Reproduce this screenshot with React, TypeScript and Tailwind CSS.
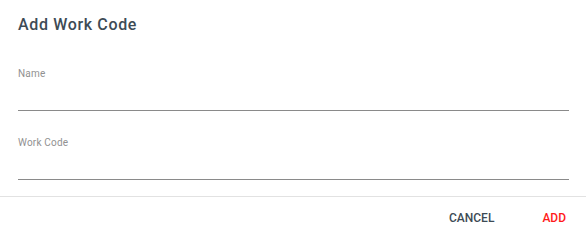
import React from 'react';

function Field({ label }: { label: string }) {
  return (
    <label className="block">
      <span className="block text-[10px] leading-[12px] text-[#919191] tracking-[0.2px]">{label}</span>
      <input
        type="text"
        className="block w-full h-[22px] mt-[9px] border-b border-[#8a8a8a] bg-transparent outline-none text-[13px] text-[#37474f]"
      />
    </label>
  );
}

export default function App() {
  return (
    <div className="w-[586px] h-[238px] bg-white font-['Roboto',sans-serif] overflow-hidden">
      <div className="px-[18px] pt-[14px]">
        <h2 className="text-[16px] leading-[22px] font-medium text-[#3d4b55] tracking-[0.65px]">Add Work Code</h2>
        <div className="mt-[32px] mr-[-1px] flex flex-col gap-[26px]">
          <Field label="Name" />
          <Field label="Work Code" />
        </div>
      </div>
      <div className="mt-[16px] border-t border-[#e2e2e2] flex justify-end items-center h-[43px] pr-[20px] gap-[48px]">
        <button className="text-[12px] font-medium text-[#3d4b55]">CANCEL</button>
        <button className="text-[12px] font-medium text-[#ff1a1a]">ADD</button>
      </div>
    </div>
  );
}
